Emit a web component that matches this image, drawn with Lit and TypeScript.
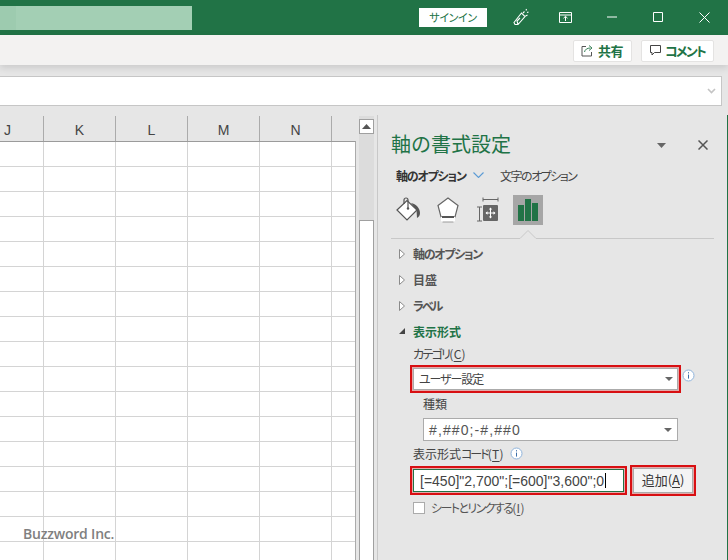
import { LitElement, html, css, svg } from "lit";
import { customElement } from "lit/decorators.js";

const info = html`<svg class="info" width="13" height="13" viewBox="0 0 13 13"><circle cx="6.5" cy="6.5" r="5.5" fill="#fff" stroke="#8fb4dc"/><path d="M6.5 3.2v1.2M6.5 5.6v4" stroke="#3c6ea8" fill="none"/></svg>`;
const drop = html`<svg class="drop" width="8" height="4" viewBox="0 0 8 4"><path d="M0 0h8L4 4z" fill="#666"/></svg>`;
const closedArrow = svg`<path d="M1.5 .5v9l5-4.500z" fill="#fff" stroke="#8a8a8a"/>`;
const openArrow = svg`<path d="M7 1v6H1z" fill="#444"/>`;

@customElement("app-root")
export class AppRoot extends LitElement {
  static styles = css`
    :host { display: flex; flex-direction: column; width: 728px; height: 560px; overflow: hidden; background: #e6e6e6;
      font-family: "Noto Sans CJK JP", "Noto Sans", sans-serif; font-size: 12px; color: #444; position: relative; font-feature-settings: "palt"; }
    .title { height: 35px; flex: none; background: #217346; display: flex; align-items: center; }
    .search { width: 192px; height: 24px; background: #a3cfb4; }
    .search::before { content: ""; display: block; width: 16px; height: 24px; background: #9dcbaf; }
    .signin { margin-left: 227px; width: 68px; height: 19px; background: #fff; color: #217346; font-size: 11px; letter-spacing: -.4px;
      display: flex; align-items: center; justify-content: center; margin-top: -1px; }
    .ticon { margin-top: -1px; display: block; flex: none; }
    .t1 { margin-left: 25px; }
    .t2 { margin-left: 29px; }
    .t3 { margin-left: 35px; }
    .t4 { margin-left: 36px; }
    .t5 { margin-left: 36px; }
    .ribbon { height: 30px; flex: none; background: #f3f2f1; display: flex; align-items: center; justify-content: flex-end; gap: 9px; padding-right: 14px;
      box-shadow: 0 3px 7px rgba(0,0,0,.12); position: relative; }
    .rbtn { height: 22px; background: #fff; border: 1px solid #e4e3e2; border-radius: 2px; display: flex; align-items: center; color: #217346; font-weight: 700; font-size: 13px; box-sizing: border-box; margin-top: 1px; }
    .share { width: 59px; padding-left: 7px; gap: 4px; letter-spacing: -.5px; }
    .comment { width: 73px; padding-left: 7px; gap: 3px; letter-spacing: -1.8px; font-size: 13px; white-space: nowrap; }
    .formula { height: 30px; flex: none; margin: 11px 6px 0 0; background: #fff; border: solid #c6c6c6; border-width: 1px 1px 1px 0; box-sizing: border-box; display: flex; align-items: center; justify-content: flex-end; padding-right: 5px; }
    .main { flex: 1; display: flex; min-height: 0; margin-top: 10px; }
    .left { width: 377px; flex: none; display: flex; position: relative; }
    .sheetcol { width: 356px; flex: none; }
    .heads { height: 25px; width: 332px; display: flex; align-items: stretch; }
    .head { width: 72px; border-right: 1px solid #ababab; color: #444; font-family: "Liberation Sans", sans-serif; font-size: 14px; display: flex; align-items: center; justify-content: center; padding-top: 3px; box-sizing: border-box; flex: none; height: 25px; }
    .head.j { width: 44px; justify-content: flex-start; padding-left: 4px; }
    .grid { height: 419px; width: 356px; box-sizing: border-box; background-color: #fff; border-top: 1px solid #9b9b9b; border-right: 1px solid #ababab;
      background-image: linear-gradient(to right, transparent 71px, #d4d4d4 71px), linear-gradient(transparent 24px, #d4d4d4 24px);
      background-size: 72px 100%, 100% 25px; background-position: -28px 0, 0 0; background-repeat: repeat-x, repeat-y; }
    .scroll { width: 15px; margin-left: 3px; flex: none; padding-top: 3px; display: flex; flex-direction: column; background: linear-gradient(#dcdcdc 0 0) no-repeat; box-sizing: border-box; }
    .sup { height: 15px; box-sizing: border-box; background: #fff; border: 1px solid #a0a0a0; display: flex; align-items: center; justify-content: center; flex: none; }
    .sth { flex: none; margin-top: 86px; height: 360px; background: #fff; border: 1px solid #a0a0a0; box-sizing: border-box; }
    .water { position: absolute; left: 23px; top: 408px; color: #808080; font: 600 14px "Open Sans", "Noto Sans", sans-serif; letter-spacing: -.2px; }
    .pane { flex: 1; border-left: 1px solid #c8c8c8; border-right: 1px solid #217346; padding: 15px 0 0 13px; min-width: 0; box-sizing: border-box; margin-top: -1px; }
    .ptitle { display: flex; align-items: center; height: 30px; }
    .ptitle h1 { margin: 0; font-size: 20px; font-weight: 400; color: #217346; width: 266px; line-height: 28px; height: 30px; font-feature-settings: normal; flex: none; }
    .x { margin-left: 32px; }
    .tabs { display: flex; align-items: center; height: 20px; margin: 5px 0 0 5px; }
    .tab1 { font-weight: 700; color: #333; letter-spacing: -1.2px; width: 77px; white-space: nowrap; flex: none; }
    .tab2 { margin-left: 16px; color: #444; letter-spacing: -1.5px; white-space: nowrap; }
    .icons { display: flex; align-items: center; height: 30px; margin-top: 10px; }
    .ibtn { width: 30px; height: 30px; display: flex; align-items: center; justify-content: center; flex: none; }
    .ibtn.sel { background: #a6a6a6; }
    .i1 { margin-left: 2px; }
    .i2 { margin-left: 10px; }
    .divider { height: 14px; width: 323px; margin-bottom: 2px; display: block; }
    .sec { display: flex; align-items: center; height: 26px; font-weight: 700; color: #555; letter-spacing: -1.3px; white-space: nowrap; }
    .sec span { padding-bottom: 2px; }
    .sec svg { width: 8px; height: 10px; margin: 0 7px 0 7px; flex: none; }
    .sec.n { letter-spacing: 0; }
    .sec.g { color: #217346; letter-spacing: 0; }
    .sec.t { letter-spacing: -2px; }
    .field { margin: 1px 0 0 22px; height: 17px; line-height: 15px; white-space: nowrap; letter-spacing: -1.7px; }
    u { text-underline-offset: 2px; }
    .p { letter-spacing: .3px; }
    .kana { letter-spacing: -2px; }
    .rowx { display: flex; align-items: center; }
    .redbox { border: 2px solid #d80f12; padding: 1px; box-sizing: border-box; background: #e3a9a9; flex: none; }
    .sel1 { margin: 2px 0 0 19px; width: 271px; height: 28px; }
    .inner { border: 1px solid #ababab; height: 100%; box-sizing: border-box; display: flex; align-items: center; justify-content: space-between; padding: 0 4px 0 5px; letter-spacing: -1.1px; color: #444; background: #fff; }
    .inner span { padding-bottom: 2px; }
    .rowx .info { margin-left: 1px; margin-top: -6px; }
    .kind { margin: 3px 0 0 32px; height: 17px; line-height: 15px; }
    .sel2 { margin: 5px 0 0 32px; width: 255px; height: 23px; border: 1px solid #ababab; box-sizing: border-box; background: #fff; display: flex; align-items: center; justify-content: space-between; padding: 0 5px 0 5px; font: 14px "Liberation Sans", sans-serif; letter-spacing: 1.1px; color: #555; }
    .fcode { margin: 5px 0 0 22px; display: flex; align-items: center; gap: 6px; height: 17px; padding-bottom: 2px; box-sizing: border-box; white-space: nowrap; }
    .fcode .info { margin-top: 0; }
    .actions { display: flex; margin: 2px 0 0 19px; gap: 3px; align-items: center; }
    .inp { width: 217px; height: 29px; }
    .inner2 { border: 1px solid #217346; background: #fff; height: 100%; box-sizing: border-box; display: flex; align-items: center; padding-left: 6px; font: 14px/1 "Liberation Sans", sans-serif; color: #444; white-space: nowrap; }
    .caret { width: 1px; height: 15px; background: #000; margin-left: 1px; }
    .addb { width: 66px; height: 31px; }
    .inner3 { border: 1px solid #ababab; background: #f4f4f4; height: 100%; padding-bottom: 2px; box-sizing: border-box; display: flex; align-items: center; justify-content: center; color: #333; font-size: 13px; white-space: pre; }
    .chk { display: flex; align-items: center; margin: 5px 0 0 22px; height: 14px; }
    .box { width: 12px; height: 12px; background: #fff; border: 1px solid #ababab; box-sizing: border-box; flex: none; margin-right: 6px; }
    .chk span { letter-spacing: -1.6px; white-space: nowrap; color: #555; padding-bottom: 2px; }
    .chk span .p { letter-spacing: .3px; padding: 0; }
  `;

  render() {
    return html`
      <div class="title">
        <div class="search"></div>
        <div class="signin">サインイン</div>
        <svg class="ticon t1" width="18" height="18" viewBox="0 0 18 18" fill="none" stroke="#fff" stroke-width="1.100">
          <path d="M2 14.500 9.500 5 13 8.500 6 16.500 3 16.500zM6 16.500l-1-3.500 3-3M11 5l1.500-1.500M13.500 8l2-1M14 2.500l.5-1.500M15 4.500l1.500-.5"/>
        </svg>
        <svg class="ticon t2" width="13" height="11" viewBox="0 0 13 11" fill="none" stroke="#fff">
          <path d="M.5.500h12v10H.5zM.5 3h12"/><path d="M6.500 9V4.500M4.500 6.200 6.500 4.300l2 1.900"/>
        </svg>
        <svg class="ticon t3" width="10" height="2" viewBox="0 0 10 2"><path d="M0 1h10" stroke="#fff"/></svg>
        <svg class="ticon t4" width="10" height="10" viewBox="0 0 10 10"><path d="M.5.500h9v9h-9z" fill="none" stroke="#fff"/></svg>
        <svg class="ticon t5" width="11" height="11" viewBox="0 0 11 11"><path d="M.5.500l10 10M10.500.500l-10 10" fill="none" stroke="#fff"/></svg>
      </div>
      <div class="ribbon">
        <div class="rbtn share">
          <svg width="13" height="13" viewBox="0 0 13 13" fill="none" stroke="#555"><path d="M5 2.500H1v9.500h9.500V8"/><path d="M3.500 8c.5-2.500 2.500-4 6-4M8 1.500 11 4 8 6.500" stroke="#217346" stroke-width=".9"/></svg>
          <span>共有</span>
        </div>
        <div class="rbtn comment">
          <svg width="13" height="13" viewBox="0 0 13 13" fill="none" stroke="#444"><path d="M1.500 1.500h10v7H5.500L3 11V8.500H1.500z"/></svg>
          <span>コメント</span>
        </div>
      </div>
      <div class="formula">
        <svg width="9" height="6" viewBox="0 0 9 6"><path d="M1 1l3.500 3.500L8 1" fill="none" stroke="#c4c4c4" stroke-width="1.600"/></svg>
      </div>
      <div class="main">
        <div class="left">
          <div class="sheetcol">
            <div class="heads">
              <div class="head j">J</div>
              <div class="head">K</div>
              <div class="head">L</div>
              <div class="head">M</div>
              <div class="head">N</div>
            </div>
            <div class="grid"></div>
          </div>
          <div class="scroll">
            <div class="sup"><svg width="9" height="5" viewBox="0 0 9 5"><path d="M0 5h9L4.500 0z" fill="#555"/></svg></div>
            <div class="sth"></div>
          </div>
          <div class="water">Buzzword Inc.</div>
        </div>
        <div class="pane">
          <div class="ptitle">
            <h1>軸の書式設定</h1>
            <svg width="9" height="5" viewBox="0 0 9 5"><path d="M0 0h9L4.500 5z" fill="#666"/></svg>
            <svg class="x" width="10" height="10" viewBox="0 0 10 10"><path d="M.5.500l9 9M9.500.500l-9 9" stroke="#555" stroke-width="1.500" fill="none"/></svg>
          </div>
          <div class="tabs">
            <div class="tab1">軸のオプション</div>
            <svg width="11" height="6" viewBox="0 0 11 6"><path d="M.5.500l5 5 5-5" fill="none" stroke="#5b9bd5" stroke-width="1.100"/></svg>
            <div class="tab2">文字のオプション</div>
          </div>
          <div class="icons">
            <div class="ibtn i1">
              <svg width="26" height="26" viewBox="0 0 26 26">
                <path d="M2 13 12 3.500 22 13 12 23z" fill="#fff" stroke="#555" stroke-width="1.200"/>
                <path d="M9 7V3a2 2 0 0 1 4 0V11" fill="none" stroke="#555" stroke-width="1.200"/>
                <circle cx="13" cy="11.500" r="1.200" fill="#555"/>
                <path d="M16 6c5 1 9 5 9 10 0 2-1 4-3 5l-.5-8z" fill="#555"/>
              </svg>
            </div>
            <div class="ibtn i2">
              <svg width="22" height="28" viewBox="0 0 22 28">
                <path d="M11 2 21 9.500 18 21H4L1 9.500z" fill="#fff" stroke="#666" stroke-width="1.200"/>
                <path d="M4 21h14v3.500l-1 1.500H5l-1-1.500z" fill="#fff"/>
                <path d="M5 21h12" stroke="#555" stroke-width="2"/>
                <path d="M5.500 26h11" stroke="#999"/>
              </svg>
            </div>
            <div class="ibtn i2">
              <svg width="24" height="26" viewBox="1 0 24 26">
                <path d="M8 2.500h15M8 .5v4M23 .5v4M2 10h5M2 24h5M4.500 10v14" fill="none" stroke="#666"/>
                <rect x="8" y="8" width="15" height="16" rx="1" fill="#666"/>
                <path d="M15.500 11v10M11 16h9" stroke="#fff"/>
                <path d="M13.800 12.500 15.500 10.500l1.700 2zM13.800 19.500l1.700 2 1.700-2zM12.500 14.300 10.500 16l2 1.700zM18.500 14.300l2 1.700-2 1.700z" fill="#fff"/>
              </svg>
            </div>
            <div class="ibtn sel i2">
              <svg width="20" height="22" viewBox="0 0 20 22"><path d="M0 6h6v16H0zM7 0h6v22H7zM14 4h6v18h-6z" fill="#217346"/></svg>
            </div>
          </div>
          <svg class="divider" viewBox="0 0 323 14"><path d="M0 13.500h129l8-8 8 8h178" fill="none" stroke="#c8c8c8"/></svg>
          <div class="sec"><svg viewBox="0 0 8 10">${closedArrow}</svg><span>軸のオプション</span></div>
          <div class="sec n"><svg viewBox="0 0 8 10">${closedArrow}</svg><span>目盛</span></div>
          <div class="sec t"><svg viewBox="0 0 8 10">${closedArrow}</svg><span>ラベル</span></div>
          <div class="sec g"><svg viewBox="0 0 8 10">${openArrow}</svg><span>表示形式</span></div>
          <div class="field">カテゴリ<span class="p">(<u>C</u>)</span></div>
          <div class="rowx">
            <div class="redbox sel1"><div class="inner"><span>ユーザー設定</span>${drop}</div></div>
            ${info}
          </div>
          <div class="kind">種類</div>
          <div class="sel2"><span>#,##0;-#,##0</span>${drop}</div>
          <div class="fcode"><span>表示形式<span class="kana">コード</span><span class="p">(<u>T</u>)</span></span>${info}</div>
          <div class="actions">
            <div class="redbox inp"><div class="inner2">[=450]"2,700";[=600]"3,600";0<i class="caret"></i></div></div>
            <div class="redbox addb"><div class="inner3">追加(<u>A</u>)</div></div>
          </div>
          <div class="chk"><div class="box"></div><span>シートとリンクする<span class="p">(<u>I</u>)</span></span></div>
        </div>
      </div>
    `;
  }
}
